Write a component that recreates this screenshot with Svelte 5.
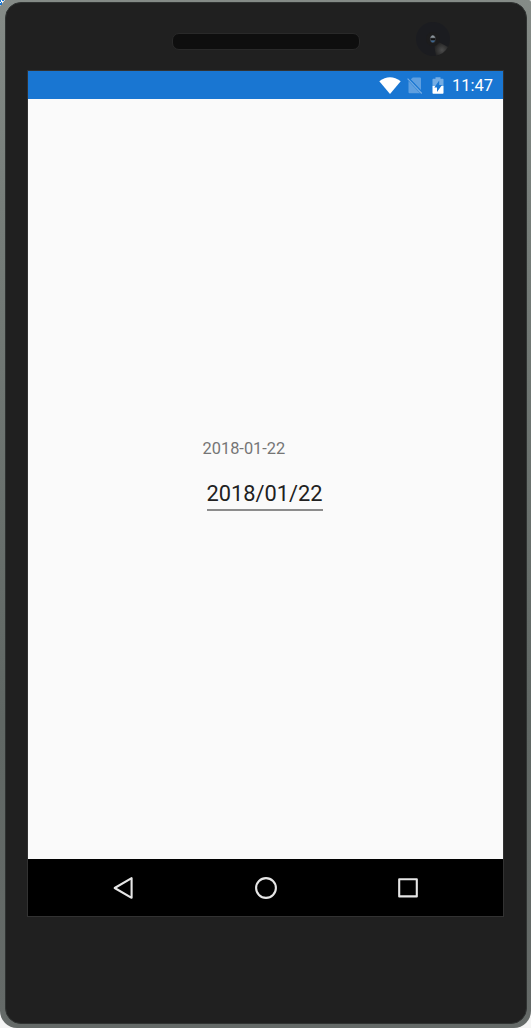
<script>
  let selected = '2018-01-22';
  let display = selected.replaceAll('-', '/');
  let time = '11:47';
</script>

<div class="device">
  <svg class="corner" viewBox="0 0 6 6" aria-hidden="true">
    <path d="M0 0H5L0 6Z" fill="#fff" />
    <path d="M0 0h1v2h-1zM2 0h2v1h-2zM1 2h1v1h-1zM0 3h2v2h-2z" fill="#1976d2" />
  </svg>
  <div class="body">
    <div class="bezel">
      <div class="speaker"></div>
      <svg class="camera" viewBox="0 0 34 34" aria-hidden="true">
        <defs>
          <radialGradient id="glare" cx="26" cy="28" r="9" gradientUnits="userSpaceOnUse">
            <stop offset="0" stop-color="#4c4c4c" />
            <stop offset="1" stop-color="#1c1c1c" />
          </radialGradient>
        </defs>
        <circle cx="17" cy="17" r="17" fill="#1b1c20" />
        <path d="M17 17L32 25A17 17 0 0 1 20 33.7Z" fill="url(#glare)" />
        <circle cx="17" cy="17" r="7" fill="#1c1c1d" />
        <ellipse cx="16.8" cy="17" rx="3" ry="4" fill="#333539" />
        <path d="M14.2 15.7q2.6-5 5.2 0z" fill="#8d969c" />
        <path d="M14.4 18.4h4.8q-2.4 4-4.8 0z" fill="#3c6790" />
        <path d="M15 16.5h4v1.5h-4z" fill="#111" />
      </svg>
    </div>
    <div class="screen">
      <header>
        <svg class="wifi" viewBox="0 0 22 17" aria-hidden="true">
          <path d="M0.3 4.2Q11-3.5 21.7 4.2L11 17Z" fill="#fff" />
        </svg>
        <svg class="sim" viewBox="0 0 16 17" aria-hidden="true">
          <path d="M3.6 2.6L5.8 0.5H13Q14 .5 14 1.5V13.6Z" fill="#5e9fe0" />
          <path d="M1.5 3.9L13.2 16.2H2.5Q1.5 16.2 1.5 15.2Z" fill="#5e9fe0" />
          <path d="M1.3 .9L15.4 15.7" stroke="#1976d2" stroke-width="1.6" />
          <path d="M.6 1.6L14.8 16.5" stroke="#75ade4" stroke-width="1.2" />
        </svg>
        <svg class="battery" viewBox="0 0 12 17" aria-hidden="true">
          <path d="M.5 2.5Q.5 1.8 1.2 1.8H3.5V.2H8.5V1.8H10.8Q11.5 1.8 11.5 2.5V9H.5Z" fill="#75ade4" />
          <path d="M.5 9H11.5V16Q11.5 16.8 10.8 16.8H1.2Q.5 16.8 .5 16Z" fill="#fff" />
          <path d="M7.2 3.4V8H10L5 15V10.5H2.3Z" fill="#1976d2" />
        </svg>
        <span class="time">{time}</span>
      </header>
      <main>
        <div class="form">
          <div class="label">{selected}</div>
          <div class="picker">{display}</div>
        </div>
      </main>
      <nav>
        <svg viewBox="0 0 24 24" aria-label="Back">
          <path d="M20.6 2.2V21.8L3.7 12Z" />
        </svg>
        <svg viewBox="0 0 24 24" aria-label="Home">
          <circle cx="12" cy="12" r="9.9" />
        </svg>
        <svg viewBox="0 0 24 24" aria-label="Recent apps">
          <rect x="3.2" y="3.2" width="17.6" height="17.2" />
        </svg>
      </nav>
    </div>
  </div>
</div>

<style>
  :global(body) {
    background: #f4f4f4;
    font-family: Roboto, sans-serif;
  }
  .device {
    position: relative;
    box-sizing: border-box;
    width: 531px;
    height: 1028px;
    padding: 2px 4px 4px 5px;
    border-radius: 5px 2px 17px 17px;
    background: linear-gradient(#858b87, #777e7a 20%, #606764 70%, #656a68);
  }
  .corner {
    position: absolute;
    width: 6px;
    height: 6px;
    top: 0;
    left: 0;
  }
  .body {
    box-sizing: border-box;
    height: 1022px;
    padding-left: 22px;
    border: 1px solid #303332;
    border-radius: 16px;
    background: #202020;
    display: flex;
    flex-direction: column;
    align-items: flex-start;
  }
  .bezel {
    box-sizing: border-box;
    width: 475px;
    height: 67px;
    flex: none;
    display: flex;
    padding: 19px 53px 0 144px;
    justify-content: space-between;
  }
  .speaker {
    box-sizing: border-box;
    width: 188px;
    height: 17px;
    margin-top: 11px;
    border: 1px solid #292929;
    border-radius: 7px;
    background: #0e0e0e;
  }
  .camera {
    width: 34px;
    height: 34px;
  }
  .screen {
    width: 475px;
    height: 845px;
    flex: none;
    margin-left: -1px;
    border: 1px solid #323232;
    display: flex;
    flex-direction: column;
    background: #fafafa;
  }
  header {
    box-sizing: border-box;
    height: 28px;
    padding-right: 10px;
    background: #1976d2;
    display: flex;
    align-items: center;
    justify-content: flex-end;
    color: #fff;
  }
  .wifi {
    width: 22px;
    height: 17px;
    margin-right: 6px;
  }
  .sim {
    width: 16px;
    height: 17px;
    margin-right: 9px;
  }
  .battery {
    width: 12px;
    height: 17px;
    margin-right: 8px;
  }
  .time {
    font-size: 16.5px;
    line-height: 28px;
    padding-top: 2px;
  }
  main {
    flex: 1;
    display: flex;
    align-items: center;
    justify-content: center;
    padding: 0 2px 9px 0;
  }
  .form {
    width: 124px;
  }
  .label {
    font-size: 16.4px;
    line-height: 22px;
    color: #757575;
  }
  .picker {
    box-sizing: border-box;
    width: 116px;
    height: 34px;
    margin: 17px 0 0 4px;
    border-bottom: 2px solid #8c8c8c;
    font-size: 21.8px;
    line-height: 34px;
    color: #212121;
    white-space: nowrap;
  }
  nav {
    height: 57px;
    display: flex;
    align-items: center;
    justify-content: center;
    gap: 118.5px;
    background: #000;
  }
  nav svg {
    width: 24px;
    height: 24px;
    fill: none;
    stroke: #e6e6e6;
    stroke-width: 2.1;
    stroke-linejoin: round;
  }
</style>
